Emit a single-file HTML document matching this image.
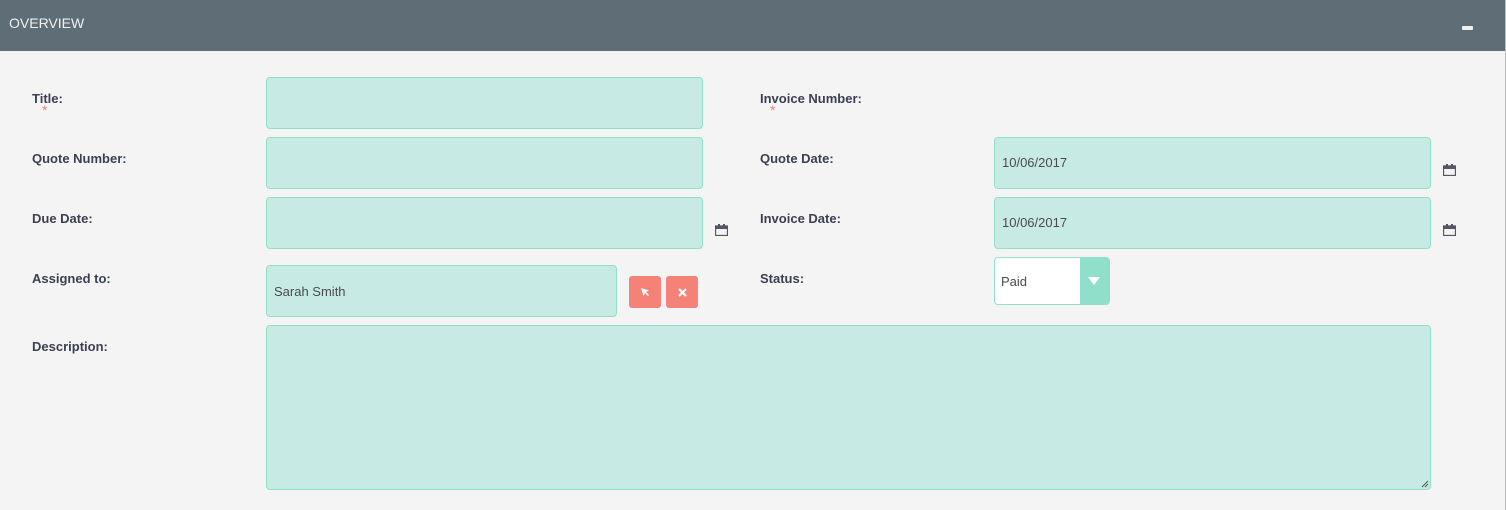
<!DOCTYPE html>
<html><head><meta charset="utf-8"><style>
*{box-sizing:border-box;margin:0;padding:0}
body{width:1506px;height:510px;background:#f4f4f4;font-family:"Liberation Sans",sans-serif;position:relative;overflow:hidden}
.hdr{position:absolute;left:0;top:0;width:1505px;height:51px;background:#5f6d77;color:#eef1f3;font-size:14px;padding:15px 0 0 9px}
.min{position:absolute;left:1462px;top:26px;width:11px;height:4px;background:#f0f0f0;border-radius:1px}
.edge{position:absolute;left:1505px;top:0;width:1px;height:510px;background:#bbb}
.lbl{position:absolute;font-size:13px;font-weight:bold;color:#3c3f52}
.req{position:absolute;color:#f08377;font-size:14px}
.in{position:absolute;background:#c8eae4;border:1px solid #8fdfcb;border-radius:4px;font-size:13px;color:#4a4a52;padding-left:7px;display:flex;align-items:center}
.cal{position:absolute;width:13px;height:12px}
.btn{position:absolute;top:276px;width:32px;height:32px;background:#f58277;border-radius:3px;color:#fff;display:flex;align-items:center;justify-content:center}
</style></head><body>
<div class="hdr">OVERVIEW</div><div class="min"></div><div class="edge"></div>

<div class="lbl" style="left:32px;top:91px">Title:</div><div class="req" style="left:42px;top:102px">*</div>
<div class="in" style="left:266px;top:77px;width:437px;height:52px"></div>
<div class="lbl" style="left:760px;top:91px">Invoice Number:</div><div class="req" style="left:770px;top:102px">*</div>

<div class="lbl" style="left:32px;top:151px">Quote Number:</div>
<div class="in" style="left:266px;top:137px;width:437px;height:52px"></div>
<div class="lbl" style="left:760px;top:151px">Quote Date:</div>
<div class="in" style="left:994px;top:137px;width:437px;height:52px;padding-bottom:2px">10/06/2017</div>

<div class="lbl" style="left:32px;top:211px">Due Date:</div>
<div class="in" style="left:266px;top:197px;width:437px;height:52px"></div>
<div class="lbl" style="left:760px;top:211px">Invoice Date:</div>
<div class="in" style="left:994px;top:197px;width:437px;height:52px;padding-bottom:2px">10/06/2017</div>

<svg class="cal" style="left:715px;top:224px" viewBox="0 0 13 12"><rect x="0.5" y="2" width="12" height="9.5" fill="none" stroke="#555566" stroke-width="1.3"/><rect x="0" y="2" width="13" height="3" fill="#555566"/><rect x="3" y="0" width="2" height="3" fill="#555566"/><rect x="8" y="0" width="2" height="3" fill="#555566"/></svg>
<svg class="cal" style="left:1443px;top:164px" viewBox="0 0 13 12"><rect x="0.5" y="2" width="12" height="9.5" fill="none" stroke="#555566" stroke-width="1.3"/><rect x="0" y="2" width="13" height="3" fill="#555566"/><rect x="3" y="0" width="2" height="3" fill="#555566"/><rect x="8" y="0" width="2" height="3" fill="#555566"/></svg>
<svg class="cal" style="left:1443px;top:224px" viewBox="0 0 13 12"><rect x="0.5" y="2" width="12" height="9.5" fill="none" stroke="#555566" stroke-width="1.3"/><rect x="0" y="2" width="13" height="3" fill="#555566"/><rect x="3" y="0" width="2" height="3" fill="#555566"/><rect x="8" y="0" width="2" height="3" fill="#555566"/></svg>

<div class="lbl" style="left:32px;top:271px">Assigned to:</div>
<div class="in" style="left:266px;top:265px;width:351px;height:52px">Sarah Smith</div>
<div class="btn" style="left:629px"><svg width="10" height="10" viewBox="0 0 10 10"><path d="M1 1 L9 3.5 L6 5 L9 8 L8 9 L5 6 L3.5 9 Z" fill="#fff"/></svg></div>
<div class="btn" style="left:666px"><svg width="9" height="9" viewBox="0 0 9 9"><path d="M1 1L8 8M8 1L1 8" stroke="#fff" stroke-width="2.2"/></svg></div>

<div class="lbl" style="left:760px;top:271px">Status:</div>
<div class="in" style="left:994px;top:257px;width:116px;height:48px;background:#fff;padding-left:6px;overflow:hidden">Paid
<div style="position:absolute;right:0;top:0;width:29px;height:46px;background:#8fdfcb"><div style="position:absolute;left:8px;top:19px;border-left:6px solid transparent;border-right:6px solid transparent;border-top:8px solid #fff"></div></div></div>

<div class="lbl" style="left:32px;top:339px">Description:</div>
<div class="in" style="left:266px;top:325px;width:1165px;height:165px">
<svg style="position:absolute;right:1px;bottom:1px" width="8" height="8" viewBox="0 0 8 8"><path d="M7 1L1 7M7 4L4 7" stroke="#555" stroke-width="1"/></svg></div>
</body></html>
